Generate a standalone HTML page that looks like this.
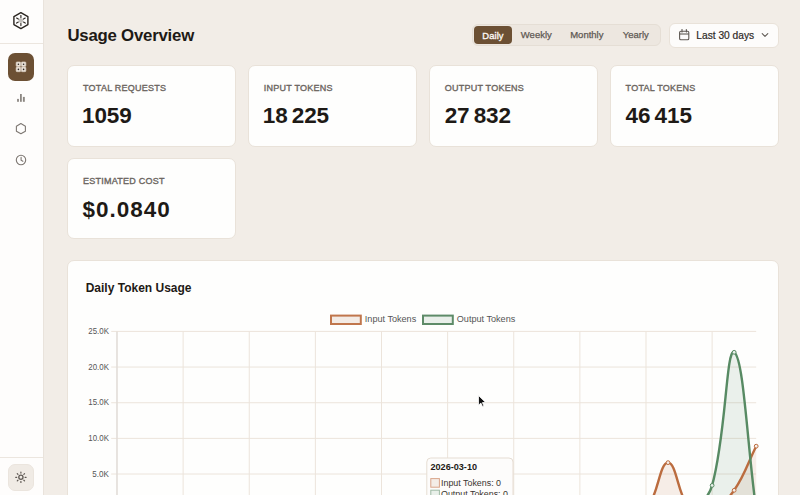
<!DOCTYPE html>
<html><head><meta charset="utf-8">
<style>
*{margin:0;padding:0;box-sizing:border-box}
html,body{width:800px;height:495px;overflow:hidden;background:#f2ede7;font-family:"Liberation Sans",sans-serif;}
.a{position:absolute}
.t{position:absolute;white-space:nowrap;line-height:1}
#side{left:0;top:0;width:44px;height:495px;background:#fefdfc;border-right:1px solid #e9e3dc}
.hr{left:0;width:43px;height:1px;background:#ece6df}
.card{background:#fefefd;border:1px solid #e9e2d9;border-radius:7px}
.lbl{font-size:9px;font-weight:normal;color:#6b6560;letter-spacing:0.25px;-webkit-text-stroke:0.35px #6b6560}
.num{font-size:22.5px;font-weight:bold;color:#1e1a16;letter-spacing:-0.1px;word-spacing:-2px}
.seg{font-size:9.5px;color:#5e5853;-webkit-text-stroke:0.25px #5e5853}
</style></head><body>
<div id="side" class="a"></div>
<div class="a hr" style="top:43px"></div>
<div class="a hr" style="top:457px"></div>
<!-- logo -->
<svg class="a" style="left:0;top:0" width="44" height="44" viewBox="0 0 44 44">
  <polygon points="20.9,12.6 27.9,16.6 27.9,24.6 20.9,28.6 13.9,24.6 13.9,16.6" fill="none" stroke="#29241f" stroke-width="1.4" stroke-linejoin="round"/>
  <circle cx="20.9" cy="20.6" r="2.3" fill="#c2bfbb"/>
  <g stroke="#2e2924" stroke-width="1.15" stroke-linecap="round">
    <line x1="20.9" y1="15.6" x2="20.9" y2="17.6"/>
    <line x1="20.9" y1="23.6" x2="20.9" y2="25.6"/>
    <line x1="16.6" y1="18.1" x2="18.3" y2="19.1"/>
    <line x1="23.5" y1="22.1" x2="25.2" y2="23.1"/>
    <line x1="16.6" y1="23.1" x2="18.3" y2="22.1"/>
    <line x1="23.5" y1="19.1" x2="25.2" y2="18.1"/>
  </g>
</svg>
<!-- active nav -->
<div class="a" style="left:8.2px;top:53px;width:26px;height:27.5px;background:#6c5034;border-radius:7px"></div>
<svg class="a" style="left:0;top:44px" width="44" height="44" viewBox="0 44 44 44">
  <g fill="#e9e0d6" stroke="#d9cdbf" stroke-width="0.6">
    <rect x="16.1" y="61.9" width="4.6" height="4.6" rx="0.9"/>
    <rect x="21.3" y="61.9" width="4.6" height="4.6" rx="0.9"/>
    <rect x="16.1" y="67.1" width="4.6" height="4.6" rx="0.9"/>
    <rect x="21.3" y="67.1" width="4.6" height="4.6" rx="0.9"/>
  </g>
  <g fill="#2a2520">
    <circle cx="18.4" cy="64.2" r="0.8"/><circle cx="23.6" cy="64.2" r="0.8"/>
    <circle cx="18.4" cy="69.4" r="0.8"/><circle cx="23.6" cy="69.4" r="0.8"/>
  </g>
</svg>
<!-- nav icons -->
<svg class="a" style="left:0;top:85px" width="44" height="90" viewBox="0 85 44 90">
  <g fill="#8c8782">
    <rect x="17.1" y="98.9" width="1.8" height="2.9"/>
    <rect x="20.0" y="94" width="1.8" height="7.8"/>
    <rect x="22.9" y="96.9" width="1.9" height="4.9"/>
  </g>
  <polygon points="20.9,123.6 25.4,126.2 25.4,131.2 20.9,133.8 16.4,131.2 16.4,126.2" fill="none" stroke="#7e7873" stroke-width="1.1" stroke-linejoin="round"/>
  <circle cx="21" cy="160" r="4.7" fill="none" stroke="#7e7873" stroke-width="1.1"/>
  <path d="M21.1 157.4 V160.2 L22.9 161.3" fill="none" stroke="#7e7873" stroke-width="1.1" stroke-linecap="round"/>
</svg>
<!-- theme btn -->
<div class="a" style="left:8.2px;top:464px;width:26px;height:27px;background:#f0ebe5;border:1px solid #ebe5de;border-radius:7px"></div>
<svg class="a" style="left:0;top:460px" width="44" height="35" viewBox="0 460 44 35">
  <circle cx="20.9" cy="477.3" r="2.1" fill="none" stroke="#5f5954" stroke-width="1.3"/>
  <g stroke="#5f5954" stroke-width="1.2" stroke-linecap="round">
    <line x1="20.9" y1="472.1" x2="20.9" y2="473.1"/><line x1="20.9" y1="481.5" x2="20.9" y2="482.5"/>
    <line x1="15.7" y1="477.3" x2="16.7" y2="477.3"/><line x1="25.1" y1="477.3" x2="26.1" y2="477.3"/>
    <line x1="17.25" y1="473.65" x2="17.95" y2="474.35"/><line x1="23.85" y1="480.25" x2="24.55" y2="480.95"/>
    <line x1="17.25" y1="480.95" x2="17.95" y2="480.25"/><line x1="23.85" y1="474.35" x2="24.55" y2="473.65"/>
  </g>
</svg>

<!-- header -->
<div class="t" style="left:67.4px;top:28.2px;font-size:16.8px;letter-spacing:-0.22px;font-weight:bold;color:#1e1a16">Usage Overview</div>
<div class="a" style="left:471.5px;top:23.8px;width:189px;height:22.7px;background:#ede7e0;border:1px solid #e5ded5;border-radius:6px"></div>
<div class="a" style="left:473.5px;top:26px;width:38.7px;height:18.3px;background:#6c5034;border-radius:4px"></div>
<div class="t seg" style="left:482.3px;top:31.1px;color:#fbf7f3;font-weight:normal;font-size:9.4px;letter-spacing:0.1px;-webkit-text-stroke:0.35px #fbf7f3">Daily</div>
<div class="t seg" style="left:520.8px;top:30.1px">Weekly</div>
<div class="t seg" style="left:570.2px;top:30.1px">Monthly</div>
<div class="t seg" style="left:622.8px;top:30.1px">Yearly</div>
<div class="a" style="left:668.8px;top:22.5px;width:109.8px;height:25px;background:#fdfcfb;border:1px solid #e9e2d9;border-radius:6px"></div>
<svg class="a" style="left:660px;top:20px" width="40" height="30" viewBox="660 20 40 30">
  <rect x="679.6" y="31.2" width="9.2" height="8.6" rx="1.3" fill="none" stroke="#5f5954" stroke-width="1.1"/>
  <line x1="679.6" y1="34" x2="688.8" y2="34" stroke="#5f5954" stroke-width="1.1"/>
  <line x1="682" y1="29.5" x2="682" y2="32" stroke="#5f5954" stroke-width="1.1" stroke-linecap="round"/>
  <line x1="686.4" y1="29.5" x2="686.4" y2="32" stroke="#5f5954" stroke-width="1.1" stroke-linecap="round"/>
</svg>
<div class="t" style="left:696.3px;top:30.9px;font-size:10.2px;color:#2f2a26;-webkit-text-stroke:0.2px #2f2a26">Last 30 days</div>
<svg class="a" style="left:755px;top:28px" width="20" height="14" viewBox="755 28 20 14">
  <path d="M762.2 33.6 L765 36.3 L767.8 33.6" fill="none" stroke="#5f5954" stroke-width="1.1" stroke-linecap="round" stroke-linejoin="round"/>
</svg>

<!-- cards -->
<div class="a card" style="left:67.3px;top:65.3px;width:168.7px;height:81.3px"></div>
<div class="a card" style="left:248.2px;top:65.3px;width:168.7px;height:81.3px"></div>
<div class="a card" style="left:429.1px;top:65.3px;width:168.7px;height:81.3px"></div>
<div class="a card" style="left:610px;top:65.3px;width:168.7px;height:81.3px"></div>
<div class="a card" style="left:67.3px;top:158.2px;width:168.7px;height:80.9px"></div>

<div class="t lbl" style="left:83px;top:83.7px">TOTAL REQUESTS</div>
<div class="t lbl" style="left:263.8px;top:83.7px">INPUT TOKENS</div>
<div class="t lbl" style="left:444.7px;top:83.7px">OUTPUT TOKENS</div>
<div class="t lbl" style="left:625.6px;top:83.7px">TOTAL TOKENS</div>
<div class="t lbl" style="left:83px;top:176.7px">ESTIMATED COST</div>

<div class="t num" style="left:82px;top:105.1px">1059</div>
<div class="t num" style="left:262.8px;top:105.1px">18 225</div>
<div class="t num" style="left:444.7px;top:105.1px">27 832</div>
<div class="t num" style="left:625.6px;top:105.1px">46 415</div>
<div class="t num" style="left:82.5px;top:198.6px;letter-spacing:1px">$0.0840</div>

<!-- chart card -->
<div class="a card" style="left:67.3px;top:260px;width:711.4px;height:260px"></div>
<div class="t" style="left:85.7px;top:281.9px;font-size:12px;font-weight:bold;color:#1e1a16">Daily Token Usage</div>

<svg class="a" style="left:0;top:0" width="800" height="495" viewBox="0 0 800 495" font-family="Liberation Sans, sans-serif">
  <!-- legend -->
  <rect x="331" y="315.6" width="29.8" height="8.4" fill="#f3ebe5" stroke="#c0764c" stroke-width="2"/>
  <text x="364.8" y="322.3" font-size="9.1" fill="#555">Input Tokens</text>
  <rect x="423" y="315.6" width="29.8" height="8.4" fill="#e9efea" stroke="#5e8b68" stroke-width="2"/>
  <text x="456.8" y="322.3" font-size="9.1" fill="#555">Output Tokens</text>
<line x1="111.2" y1="509.70" x2="756.20" y2="509.70" stroke="#ece4db" stroke-width="1"/>
<line x1="111.2" y1="474.04" x2="756.20" y2="474.04" stroke="#ece4db" stroke-width="1"/>
<line x1="111.2" y1="438.38" x2="756.20" y2="438.38" stroke="#ece4db" stroke-width="1"/>
<line x1="111.2" y1="402.72" x2="756.20" y2="402.72" stroke="#ece4db" stroke-width="1"/>
<line x1="111.2" y1="367.06" x2="756.20" y2="367.06" stroke="#ece4db" stroke-width="1"/>
<line x1="111.2" y1="331.40" x2="756.20" y2="331.40" stroke="#ece4db" stroke-width="1"/>
<line x1="117.00" y1="331.40" x2="117.00" y2="514.70" stroke="#e2ddd8" stroke-width="1.6"/>
<line x1="183.12" y1="331.40" x2="183.12" y2="514.70" stroke="#ece4db" stroke-width="1"/>
<line x1="249.25" y1="331.40" x2="249.25" y2="514.70" stroke="#ece4db" stroke-width="1"/>
<line x1="315.37" y1="331.40" x2="315.37" y2="514.70" stroke="#ece4db" stroke-width="1"/>
<line x1="381.50" y1="331.40" x2="381.50" y2="514.70" stroke="#ece4db" stroke-width="1"/>
<line x1="447.62" y1="331.40" x2="447.62" y2="514.70" stroke="#ece4db" stroke-width="1"/>
<line x1="513.74" y1="331.40" x2="513.74" y2="514.70" stroke="#ece4db" stroke-width="1"/>
<line x1="579.87" y1="331.40" x2="579.87" y2="514.70" stroke="#ece4db" stroke-width="1"/>
<line x1="645.99" y1="331.40" x2="645.99" y2="514.70" stroke="#ece4db" stroke-width="1"/>
<line x1="712.12" y1="331.40" x2="712.12" y2="514.70" stroke="#ece4db" stroke-width="1"/>
<text x="92.30" y="476.74" font-size="8.4" fill="#555" textLength="16.6" lengthAdjust="spacingAndGlyphs">5.0K</text>
<text x="88.30" y="441.08" font-size="8.4" fill="#555" textLength="20.6" lengthAdjust="spacingAndGlyphs">10.0K</text>
<text x="88.30" y="405.42" font-size="8.4" fill="#555" textLength="20.6" lengthAdjust="spacingAndGlyphs">15.0K</text>
<text x="88.30" y="369.76" font-size="8.4" fill="#555" textLength="20.6" lengthAdjust="spacingAndGlyphs">20.0K</text>
<text x="88.30" y="334.10" font-size="8.4" fill="#555" textLength="20.6" lengthAdjust="spacingAndGlyphs">25.0K</text>
<path d="M117.00 509.70 C125.82 509.70 130.22 509.70 139.04 509.70 C147.86 509.70 152.27 509.70 161.08 509.70 C169.90 509.70 174.31 509.70 183.12 509.70 C191.94 509.70 196.35 509.70 205.17 509.70 C213.98 509.70 218.39 509.70 227.21 509.70 C236.02 509.70 240.43 509.70 249.25 509.70 C258.06 509.70 262.47 509.70 271.29 509.70 C280.11 509.70 284.51 509.70 293.33 509.70 C302.15 509.70 306.56 509.70 315.37 509.70 C324.19 509.70 328.60 509.70 337.41 509.70 C346.23 509.70 350.64 509.70 359.46 509.70 C368.27 509.70 372.68 509.70 381.50 509.70 C390.31 509.70 394.72 509.70 403.54 509.70 C412.35 509.70 416.76 509.70 425.58 509.70 C434.40 509.70 438.80 509.70 447.62 509.70 C456.44 509.70 460.85 509.70 469.66 509.70 C478.48 509.70 482.89 509.70 491.70 509.70 C500.52 509.70 504.93 509.70 513.74 509.70 C522.56 509.70 526.97 509.70 535.79 509.70 C544.60 509.70 549.01 509.70 557.83 509.70 C566.64 509.70 571.05 509.70 579.87 509.70 C588.69 509.70 593.09 509.70 601.91 509.70 C610.73 509.70 615.14 509.70 623.95 509.70 C632.77 509.70 640.74 509.70 645.99 509.70 C658.38 496.48 659.22 462.63 668.03 462.63 C676.85 462.63 677.69 496.48 690.08 509.70 C695.33 509.70 704.56 509.70 712.12 509.70 C722.19 505.27 727.58 499.78 734.16 490.30 C745.21 474.38 747.38 463.83 756.20 446.19 L756.20 509.70 L117.00 509.70 Z" fill="rgba(193,116,74,0.12)"/>
<path d="M117.00 509.70 C125.82 509.70 130.22 509.70 139.04 509.70 C147.86 509.70 152.27 509.70 161.08 509.70 C169.90 509.70 174.31 509.70 183.12 509.70 C191.94 509.70 196.35 509.70 205.17 509.70 C213.98 509.70 218.39 509.70 227.21 509.70 C236.02 509.70 240.43 509.70 249.25 509.70 C258.06 509.70 262.47 509.70 271.29 509.70 C280.11 509.70 284.51 509.70 293.33 509.70 C302.15 509.70 306.56 509.70 315.37 509.70 C324.19 509.70 328.60 509.70 337.41 509.70 C346.23 509.70 350.64 509.70 359.46 509.70 C368.27 509.70 372.68 509.70 381.50 509.70 C390.31 509.70 394.72 509.70 403.54 509.70 C412.35 509.70 416.76 509.70 425.58 509.70 C434.40 509.70 438.80 509.70 447.62 509.70 C456.44 509.70 460.85 509.70 469.66 509.70 C478.48 509.70 482.89 509.70 491.70 509.70 C500.52 509.70 504.93 509.70 513.74 509.70 C522.56 509.70 526.97 509.70 535.79 509.70 C544.60 509.70 549.01 509.70 557.83 509.70 C566.64 509.70 571.05 509.70 579.87 509.70 C588.69 509.70 593.09 509.70 601.91 509.70 C610.73 509.70 615.14 509.70 623.95 509.70 C632.77 509.70 637.18 509.70 645.99 509.70 C654.81 509.70 659.22 509.70 668.03 509.70 C676.85 509.70 682.99 509.70 690.08 509.70 C700.62 503.89 708.67 497.72 712.12 485.40 C726.30 434.76 726.06 347.83 734.16 352.30 C743.70 357.55 747.38 446.74 756.20 509.70 L756.20 509.70 L117.00 509.70 Z" fill="rgba(94,140,104,0.12)"/>
<path d="M117.00 509.70 C125.82 509.70 130.22 509.70 139.04 509.70 C147.86 509.70 152.27 509.70 161.08 509.70 C169.90 509.70 174.31 509.70 183.12 509.70 C191.94 509.70 196.35 509.70 205.17 509.70 C213.98 509.70 218.39 509.70 227.21 509.70 C236.02 509.70 240.43 509.70 249.25 509.70 C258.06 509.70 262.47 509.70 271.29 509.70 C280.11 509.70 284.51 509.70 293.33 509.70 C302.15 509.70 306.56 509.70 315.37 509.70 C324.19 509.70 328.60 509.70 337.41 509.70 C346.23 509.70 350.64 509.70 359.46 509.70 C368.27 509.70 372.68 509.70 381.50 509.70 C390.31 509.70 394.72 509.70 403.54 509.70 C412.35 509.70 416.76 509.70 425.58 509.70 C434.40 509.70 438.80 509.70 447.62 509.70 C456.44 509.70 460.85 509.70 469.66 509.70 C478.48 509.70 482.89 509.70 491.70 509.70 C500.52 509.70 504.93 509.70 513.74 509.70 C522.56 509.70 526.97 509.70 535.79 509.70 C544.60 509.70 549.01 509.70 557.83 509.70 C566.64 509.70 571.05 509.70 579.87 509.70 C588.69 509.70 593.09 509.70 601.91 509.70 C610.73 509.70 615.14 509.70 623.95 509.70 C632.77 509.70 640.74 509.70 645.99 509.70 C658.38 496.48 659.22 462.63 668.03 462.63 C676.85 462.63 677.69 496.48 690.08 509.70 C695.33 509.70 704.56 509.70 712.12 509.70 C722.19 505.27 727.58 499.78 734.16 490.30 C745.21 474.38 747.38 463.83 756.20 446.19" fill="none" stroke="#bb6c3f" stroke-width="2.4"/>
<path d="M117.00 509.70 C125.82 509.70 130.22 509.70 139.04 509.70 C147.86 509.70 152.27 509.70 161.08 509.70 C169.90 509.70 174.31 509.70 183.12 509.70 C191.94 509.70 196.35 509.70 205.17 509.70 C213.98 509.70 218.39 509.70 227.21 509.70 C236.02 509.70 240.43 509.70 249.25 509.70 C258.06 509.70 262.47 509.70 271.29 509.70 C280.11 509.70 284.51 509.70 293.33 509.70 C302.15 509.70 306.56 509.70 315.37 509.70 C324.19 509.70 328.60 509.70 337.41 509.70 C346.23 509.70 350.64 509.70 359.46 509.70 C368.27 509.70 372.68 509.70 381.50 509.70 C390.31 509.70 394.72 509.70 403.54 509.70 C412.35 509.70 416.76 509.70 425.58 509.70 C434.40 509.70 438.80 509.70 447.62 509.70 C456.44 509.70 460.85 509.70 469.66 509.70 C478.48 509.70 482.89 509.70 491.70 509.70 C500.52 509.70 504.93 509.70 513.74 509.70 C522.56 509.70 526.97 509.70 535.79 509.70 C544.60 509.70 549.01 509.70 557.83 509.70 C566.64 509.70 571.05 509.70 579.87 509.70 C588.69 509.70 593.09 509.70 601.91 509.70 C610.73 509.70 615.14 509.70 623.95 509.70 C632.77 509.70 637.18 509.70 645.99 509.70 C654.81 509.70 659.22 509.70 668.03 509.70 C676.85 509.70 682.99 509.70 690.08 509.70 C700.62 503.89 708.67 497.72 712.12 485.40 C726.30 434.76 726.06 347.83 734.16 352.30 C743.70 357.55 747.38 446.74 756.20 509.70" fill="none" stroke="#578a63" stroke-width="2.4"/>
<circle cx="117.00" cy="509.70" r="1.9" fill="#f6eee8" stroke="#bb6c3f" stroke-width="1"/>
<circle cx="139.04" cy="509.70" r="1.9" fill="#f6eee8" stroke="#bb6c3f" stroke-width="1"/>
<circle cx="161.08" cy="509.70" r="1.9" fill="#f6eee8" stroke="#bb6c3f" stroke-width="1"/>
<circle cx="183.12" cy="509.70" r="1.9" fill="#f6eee8" stroke="#bb6c3f" stroke-width="1"/>
<circle cx="205.17" cy="509.70" r="1.9" fill="#f6eee8" stroke="#bb6c3f" stroke-width="1"/>
<circle cx="227.21" cy="509.70" r="1.9" fill="#f6eee8" stroke="#bb6c3f" stroke-width="1"/>
<circle cx="249.25" cy="509.70" r="1.9" fill="#f6eee8" stroke="#bb6c3f" stroke-width="1"/>
<circle cx="271.29" cy="509.70" r="1.9" fill="#f6eee8" stroke="#bb6c3f" stroke-width="1"/>
<circle cx="293.33" cy="509.70" r="1.9" fill="#f6eee8" stroke="#bb6c3f" stroke-width="1"/>
<circle cx="315.37" cy="509.70" r="1.9" fill="#f6eee8" stroke="#bb6c3f" stroke-width="1"/>
<circle cx="337.41" cy="509.70" r="1.9" fill="#f6eee8" stroke="#bb6c3f" stroke-width="1"/>
<circle cx="359.46" cy="509.70" r="1.9" fill="#f6eee8" stroke="#bb6c3f" stroke-width="1"/>
<circle cx="381.50" cy="509.70" r="1.9" fill="#f6eee8" stroke="#bb6c3f" stroke-width="1"/>
<circle cx="403.54" cy="509.70" r="1.9" fill="#f6eee8" stroke="#bb6c3f" stroke-width="1"/>
<circle cx="425.58" cy="509.70" r="1.9" fill="#f6eee8" stroke="#bb6c3f" stroke-width="1"/>
<circle cx="447.62" cy="509.70" r="1.9" fill="#f6eee8" stroke="#bb6c3f" stroke-width="1"/>
<circle cx="469.66" cy="509.70" r="1.9" fill="#f6eee8" stroke="#bb6c3f" stroke-width="1"/>
<circle cx="491.70" cy="509.70" r="1.9" fill="#f6eee8" stroke="#bb6c3f" stroke-width="1"/>
<circle cx="513.74" cy="509.70" r="1.9" fill="#f6eee8" stroke="#bb6c3f" stroke-width="1"/>
<circle cx="535.79" cy="509.70" r="1.9" fill="#f6eee8" stroke="#bb6c3f" stroke-width="1"/>
<circle cx="557.83" cy="509.70" r="1.9" fill="#f6eee8" stroke="#bb6c3f" stroke-width="1"/>
<circle cx="579.87" cy="509.70" r="1.9" fill="#f6eee8" stroke="#bb6c3f" stroke-width="1"/>
<circle cx="601.91" cy="509.70" r="1.9" fill="#f6eee8" stroke="#bb6c3f" stroke-width="1"/>
<circle cx="623.95" cy="509.70" r="1.9" fill="#f6eee8" stroke="#bb6c3f" stroke-width="1"/>
<circle cx="645.99" cy="509.70" r="1.9" fill="#f6eee8" stroke="#bb6c3f" stroke-width="1"/>
<circle cx="668.03" cy="462.63" r="1.9" fill="#f6eee8" stroke="#bb6c3f" stroke-width="1"/>
<circle cx="690.08" cy="509.70" r="1.9" fill="#f6eee8" stroke="#bb6c3f" stroke-width="1"/>
<circle cx="712.12" cy="509.70" r="1.9" fill="#f6eee8" stroke="#bb6c3f" stroke-width="1"/>
<circle cx="734.16" cy="490.30" r="1.9" fill="#f6eee8" stroke="#bb6c3f" stroke-width="1"/>
<circle cx="756.20" cy="446.19" r="1.9" fill="#f6eee8" stroke="#bb6c3f" stroke-width="1"/>
<circle cx="117.00" cy="509.70" r="1.9" fill="#e9f0ea" stroke="#578a63" stroke-width="1"/>
<circle cx="139.04" cy="509.70" r="1.9" fill="#e9f0ea" stroke="#578a63" stroke-width="1"/>
<circle cx="161.08" cy="509.70" r="1.9" fill="#e9f0ea" stroke="#578a63" stroke-width="1"/>
<circle cx="183.12" cy="509.70" r="1.9" fill="#e9f0ea" stroke="#578a63" stroke-width="1"/>
<circle cx="205.17" cy="509.70" r="1.9" fill="#e9f0ea" stroke="#578a63" stroke-width="1"/>
<circle cx="227.21" cy="509.70" r="1.9" fill="#e9f0ea" stroke="#578a63" stroke-width="1"/>
<circle cx="249.25" cy="509.70" r="1.9" fill="#e9f0ea" stroke="#578a63" stroke-width="1"/>
<circle cx="271.29" cy="509.70" r="1.9" fill="#e9f0ea" stroke="#578a63" stroke-width="1"/>
<circle cx="293.33" cy="509.70" r="1.9" fill="#e9f0ea" stroke="#578a63" stroke-width="1"/>
<circle cx="315.37" cy="509.70" r="1.9" fill="#e9f0ea" stroke="#578a63" stroke-width="1"/>
<circle cx="337.41" cy="509.70" r="1.9" fill="#e9f0ea" stroke="#578a63" stroke-width="1"/>
<circle cx="359.46" cy="509.70" r="1.9" fill="#e9f0ea" stroke="#578a63" stroke-width="1"/>
<circle cx="381.50" cy="509.70" r="1.9" fill="#e9f0ea" stroke="#578a63" stroke-width="1"/>
<circle cx="403.54" cy="509.70" r="1.9" fill="#e9f0ea" stroke="#578a63" stroke-width="1"/>
<circle cx="425.58" cy="509.70" r="1.9" fill="#e9f0ea" stroke="#578a63" stroke-width="1"/>
<circle cx="447.62" cy="509.70" r="1.9" fill="#e9f0ea" stroke="#578a63" stroke-width="1"/>
<circle cx="469.66" cy="509.70" r="1.9" fill="#e9f0ea" stroke="#578a63" stroke-width="1"/>
<circle cx="491.70" cy="509.70" r="1.9" fill="#e9f0ea" stroke="#578a63" stroke-width="1"/>
<circle cx="513.74" cy="509.70" r="1.9" fill="#e9f0ea" stroke="#578a63" stroke-width="1"/>
<circle cx="535.79" cy="509.70" r="1.9" fill="#e9f0ea" stroke="#578a63" stroke-width="1"/>
<circle cx="557.83" cy="509.70" r="1.9" fill="#e9f0ea" stroke="#578a63" stroke-width="1"/>
<circle cx="579.87" cy="509.70" r="1.9" fill="#e9f0ea" stroke="#578a63" stroke-width="1"/>
<circle cx="601.91" cy="509.70" r="1.9" fill="#e9f0ea" stroke="#578a63" stroke-width="1"/>
<circle cx="623.95" cy="509.70" r="1.9" fill="#e9f0ea" stroke="#578a63" stroke-width="1"/>
<circle cx="645.99" cy="509.70" r="1.9" fill="#e9f0ea" stroke="#578a63" stroke-width="1"/>
<circle cx="668.03" cy="509.70" r="1.9" fill="#e9f0ea" stroke="#578a63" stroke-width="1"/>
<circle cx="690.08" cy="509.70" r="1.9" fill="#e9f0ea" stroke="#578a63" stroke-width="1"/>
<circle cx="712.12" cy="485.40" r="1.9" fill="#e9f0ea" stroke="#578a63" stroke-width="1"/>
<circle cx="734.16" cy="352.30" r="1.9" fill="#e9f0ea" stroke="#578a63" stroke-width="1"/>
<circle cx="756.20" cy="509.70" r="1.9" fill="#e9f0ea" stroke="#578a63" stroke-width="1"/>
  <!-- tooltip -->
  <rect x="426.8" y="458" width="86.2" height="60" rx="4" fill="#fdfcfb" stroke="#e6ddd3" stroke-width="1"/>
  <text x="430.5" y="470.3" font-size="9.1" font-weight="bold" fill="#1e1a16">2026-03-10</text>
  <rect x="430.8" y="478.6" width="8.6" height="8.6" fill="#f4ede7" stroke="#d9a58a" stroke-width="1"/>
  <text x="441" y="485.7" font-size="8.9" fill="#3a3530">Input Tokens: 0</text>
  <rect x="430.8" y="490.2" width="8.6" height="8.6" fill="#e9f0ea" stroke="#9fbaa5" stroke-width="1"/>
  <text x="441" y="497.3" font-size="8.9" fill="#3a3530">Output Tokens: 0</text>
  <!-- cursor -->
  <path d="M478.5 395.5 L478.5 405.2 L480.9 403.1 L482.5 406.6 L483.9 406 L482.4 402.6 L485.6 402.4 Z" fill="#111" stroke="#fff" stroke-width="0.8" stroke-linejoin="round"/>
</svg>
</body></html>
